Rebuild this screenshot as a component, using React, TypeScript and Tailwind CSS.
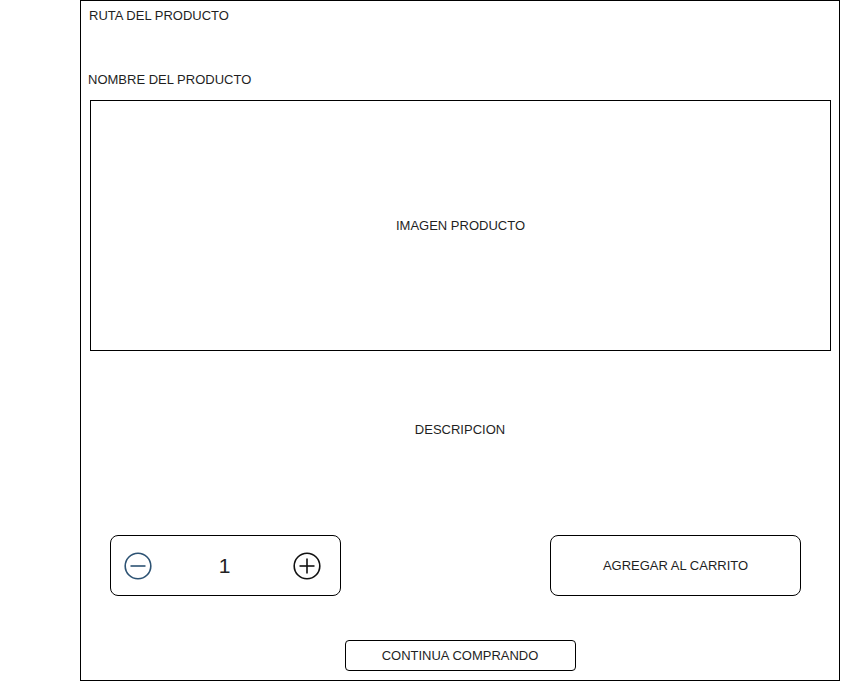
const font = { fontFamily: '"Liberation Sans", Arial, sans-serif' };

const CircleIcon = ({ plus, color }: { plus?: boolean; color: string }) => (
  <svg width="28" height="28" viewBox="0 0 28 28" fill="none" stroke={color} strokeWidth="1.6">
    <circle cx="14" cy="14" r="12.8" />
    <line x1="6.5" y1="14" x2="21.5" y2="14" />
    {plus && <line x1="14" y1="6.5" x2="14" y2="21.5" />}
  </svg>
);

export default function App() {
  return (
    <div className="bg-white w-[841px] h-[681px]" style={font}>
      <div className="ml-[80px] w-[760px] h-[681px] border border-black flex flex-col text-[13px] text-[#1f1f1f]">
        <div className="h-[29px] pl-[8px] flex items-center">RUTA DEL PRODUCTO</div>
        <div className="mt-[36px] h-[28px] pl-[7px] flex items-center">NOMBRE DEL PRODUCTO</div>
        <div className="mt-[6px] ml-[9px] w-[741px] h-[251px] border border-black flex items-center justify-center">
          IMAGEN PRODUCTO
        </div>
        <div className="h-[158px] flex items-center justify-center">DESCRIPCION</div>
        <div className="mt-[26px] flex items-start">
          <div className="ml-[29px] w-[231px] h-[61px] border border-black rounded-[8px] flex items-center pl-[13px] pr-[19px]">
            <CircleIcon color="#2c5273" />
            <span className="flex-1 text-center text-[21px] text-[#222] pl-[4px]">1</span>
            <CircleIcon plus color="#111" />
          </div>
          <div className="ml-[209px] w-[251px] h-[61px] border border-black rounded-[8px] flex items-center justify-center">
            AGREGAR AL CARRITO
          </div>
        </div>
        <div className="mt-[44px] mx-auto w-[231px] h-[31px] border border-black rounded-[4px] flex items-center justify-center">
          CONTINUA COMPRANDO
        </div>
      </div>
    </div>
  );
}
